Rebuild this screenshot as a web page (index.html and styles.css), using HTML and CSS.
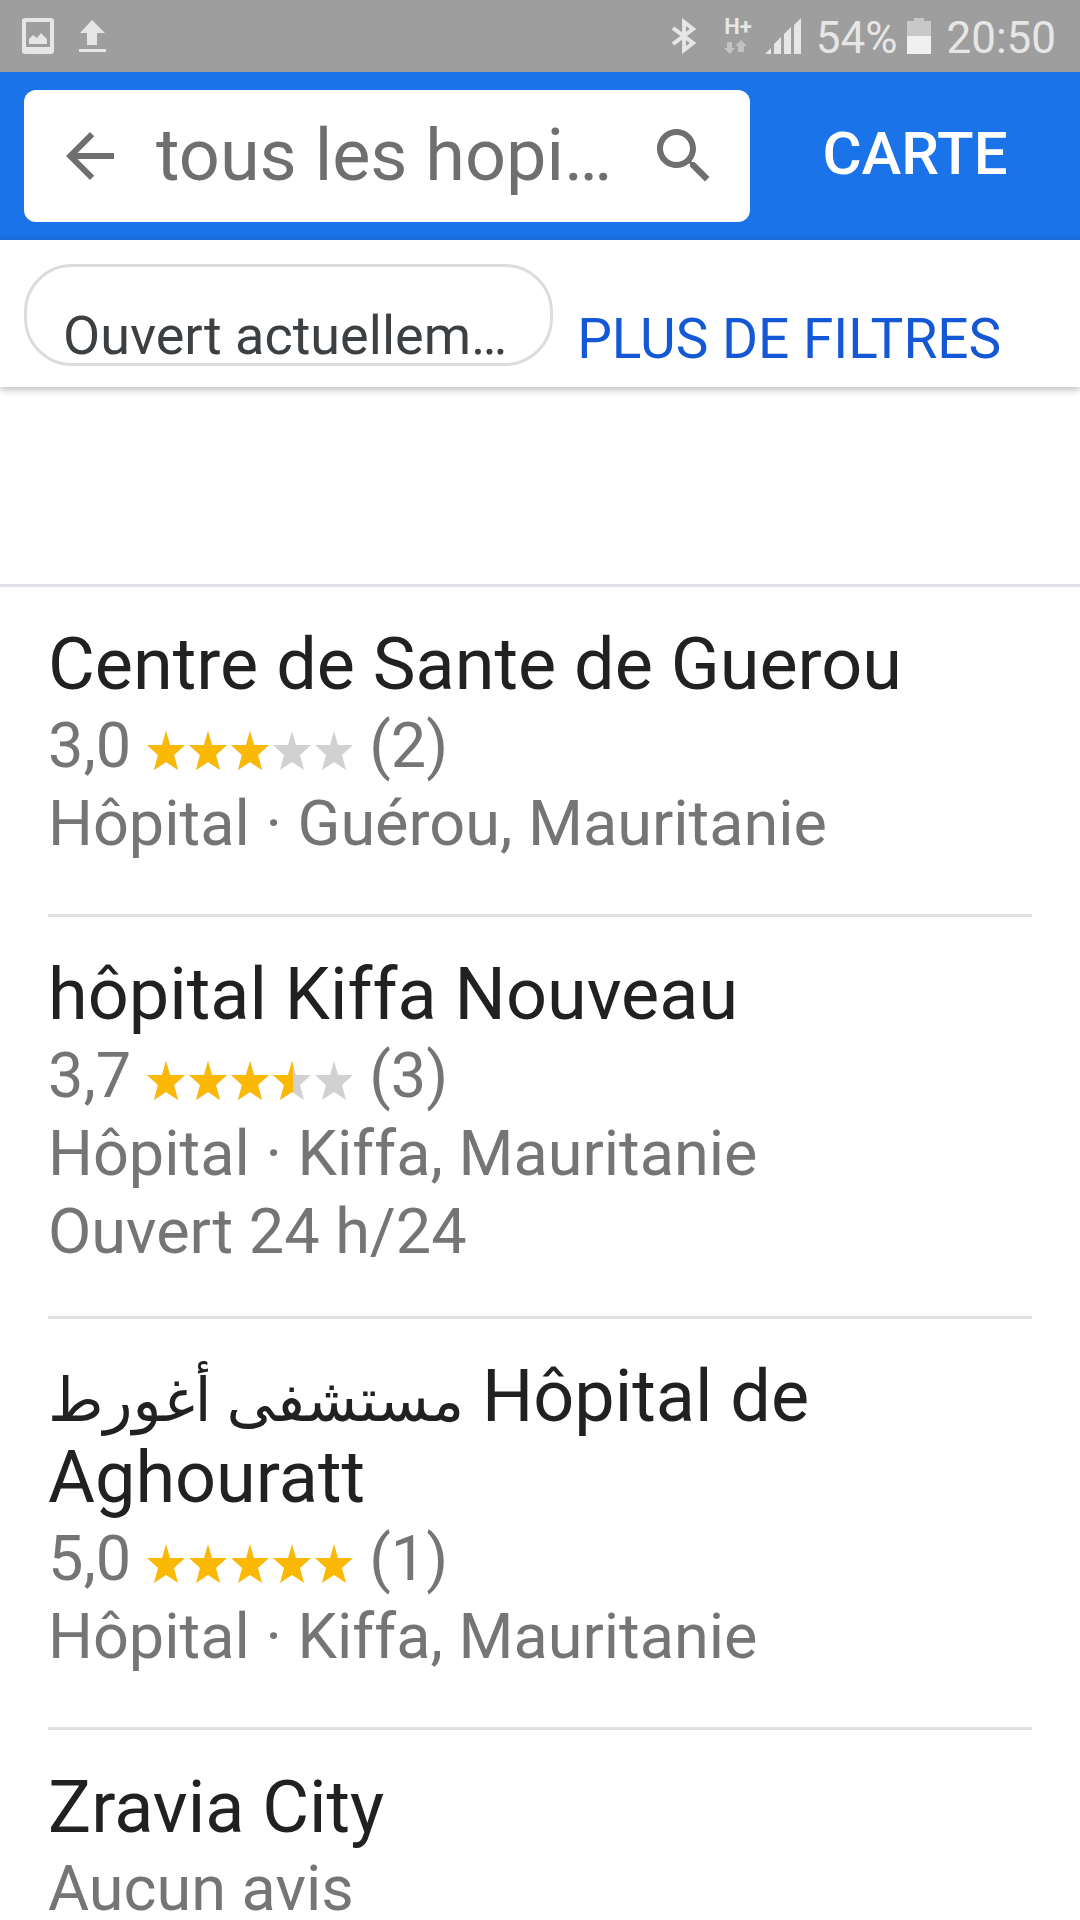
FILE: index.html
```
<!DOCTYPE html>
<html lang="fr">
<head>
<meta charset="utf-8">
<meta name="viewport" content="width=device-width, initial-scale=1">
<title>tous les hopitaux</title>
<link rel="stylesheet" href="styles.css">
</head>
<body>
<svg class="defs" aria-hidden="true">
  <defs>
    <path id="star" d="M19 0 23 14H38L27 24 31 39 19 31 7 39 11 24 0 14H15Z"/>
    <g id="star-row">
      <use href="#star"/><use href="#star" x="42"/><use href="#star" x="84"/><use href="#star" x="126"/><use href="#star" x="168"/>
    </g>
    <clipPath id="clip-3"><rect width="124" height="39"/></clipPath>
    <clipPath id="clip-3-5"><rect width="146" height="39"/></clipPath>
  </defs>
</svg>
<div class="app">
  <div class="status">
    <div class="status-group status-left">
      <svg width="32" height="36" viewBox="0 0 32 36"><path fill-rule="evenodd" d="M3 0H29Q32 0 32 3V33Q32 36 29 36H3Q0 36 0 33V3Q0 0 3 0ZM4 4V29H28V4ZM7 26V21L11 17 15 20 19 15 25 21V26Z"/></svg>
      <svg width="27" height="32" viewBox="0 0 27 32"><path d="M13 0 26 13H18V25H8V13H1ZM0 29H27V32H0Z"/></svg>
    </div>
    <div class="status-group status-right">
      <svg class="bluetooth" width="24" height="36" viewBox="0 0 24 36"><path fill="none" stroke="#e6e6e6" stroke-width="4" d="M1 10 21 25 12 32V4L21 11 1 26"/></svg>
      <div class="network">
        <span>H+</span>
        <svg width="24" height="14" viewBox="0 0 24 14"><path fill="#c2c2c2" d="M3 2H8V8H11L6 14 0 8H3ZM17 0 23 6H20V12H14V6H11Z"/></svg>
      </div>
      <svg class="signal" width="37" height="36" viewBox="0 0 37 36"><path d="M0 36 6 30V36ZM9 36V26L16 19V36ZM19 36V16L26 9V36ZM29 36V7L36 0V36Z"/></svg>
      <span class="readout">54%</span>
      <svg class="battery" width="24" height="36" viewBox="0 0 24 36"><path fill="#c8c8c8" d="M7 0H17V3H24V18H0V3H7Z"/><path fill="#f0f0f0" d="M0 18H24V36H0Z"/></svg>
      <span class="readout">20:50</span>
    </div>
  </div>

  <header class="header">
    <form class="search">
      <button class="icon-button" type="button" aria-label="Retour"><svg width="72" height="72" viewBox="0 0 24 24"><path d="M20 11H7.83l5.59-5.59L12 4l-8 8 8 8 1.41-1.41L7.83 13H20v-2z"/></svg></button>
      <input class="search-input" type="text" aria-label="Rechercher" value="tous les hopi…">
      <button class="icon-button" type="button" aria-label="Lancer la recherche"><svg width="72" height="72" viewBox="0 0 24 24"><path d="M15.5 14h-.79l-.28-.27C15.41 12.59 16 11.11 16 9.5 16 5.91 13.09 3 9.5 3S3 5.91 3 9.5 5.91 16 9.5 16c1.61 0 3.09-.59 4.23-1.57l.27.28v.79l5 4.99L20.49 19l-4.99-5zm-6 0C7.01 14 5 11.99 5 9.5S7.01 5 9.5 5 14 7.01 14 9.5 11.99 14 9.5 14z"/></svg></button>
    </form>
    <button class="map-button" type="button">CARTE</button>
  </header>

  <nav class="filters">
    <button class="chip" type="button">Ouvert actuellem…</button>
    <a class="more" href="#">PLUS DE FILTRES</a>
  </nav>

  <main class="results">
    <article class="place">
      <h2 class="name">Centre de Sante de Guerou</h2>
      <div class="line rating"><span>3,0</span><svg width="206" height="39" role="img" aria-label="3 étoiles sur 5"><use href="#star-row" fill="#d1d1d1"/><use href="#star-row" fill="#fbb905" clip-path="url(#clip-3)"/></svg><span>(2)</span></div>
      <div class="line">Hôpital · Guérou, Mauritanie</div>
    </article>
    <article class="place place-hours">
      <h2 class="name">hôpital Kiffa Nouveau</h2>
      <div class="line rating"><span>3,7</span><svg width="206" height="39" role="img" aria-label="3,5 étoiles sur 5"><use href="#star-row" fill="#d1d1d1"/><use href="#star-row" fill="#fbb905" clip-path="url(#clip-3-5)"/></svg><span>(3)</span></div>
      <div class="line">Hôpital · Kiffa, Mauritanie</div>
      <div class="line">Ouvert 24 h/24</div>
    </article>
    <article class="place">
      <h2 class="name"><span class="arabic" lang="ar">مستشفى أغورط</span> Hôpital de Aghouratt</h2>
      <div class="line rating"><span>5,0</span><svg width="206" height="39" role="img" aria-label="5 étoiles sur 5"><use href="#star-row" fill="#fbb905"/></svg><span>(1)</span></div>
      <div class="line">Hôpital · Kiffa, Mauritanie</div>
    </article>
    <article class="place">
      <h2 class="name">Zravia City</h2>
      <div class="line">Aucun avis</div>
    </article>
  </main>
</div>
</body>
</html>
```
FILE: styles.css
```
* {
  box-sizing: border-box;
}

body {
  margin: 0;
  background: #fff;
  font-family: Roboto, "DejaVu Sans", sans-serif;
}

button,
input {
  margin: 0;
  padding: 0;
  border: 0;
  background: none;
  font: inherit;
}

svg {
  display: block;
  flex: none;
}

.defs {
  position: absolute;
  width: 0;
  height: 0;
}

.app {
  display: flex;
  flex-direction: column;
  height: 100vh;
  overflow: hidden;
}

/* Status bar */
.status {
  display: flex;
  flex: none;
  justify-content: space-between;
  height: 72px;
  padding: 0 24px 0 22px;
  background: #9e9e9e;
  color: #e6e6e6;
  fill: #e6e6e6;
  font-size: 44px;
}

.status-group {
  display: flex;
  align-items: center;
}

.status-left {
  gap: 25px;
}

.bluetooth {
  margin-right: 28px;
}

.network {
  display: flex;
  flex-direction: column;
  gap: 5px;
  margin-right: 13px;
  font-size: 22px;
  font-weight: 700;
  line-height: 16px;
}

.signal {
  margin-right: 14px;
}

.readout {
  padding-top: 3px;
}

.battery {
  margin: 0 15px 0 10px;
}

/* Search header */
.header {
  display: flex;
  flex: none;
  height: 168px;
  padding: 18px 0 18px 24px;
  background: #1a73e8;
}

.search {
  display: flex;
  flex: 1;
  align-items: center;
  min-width: 0;
  padding: 0 30px;
  border-radius: 12px;
  background: #fff;
}

.icon-button {
  flex: none;
  fill: #6f6f6f;
}

.search-input {
  flex: 1;
  min-width: 0;
  padding: 0 0 2px 30px;
  color: #6f6f6f;
  font-size: 72px;
  text-overflow: ellipsis;
}

.map-button {
  flex: none;
  width: 330px;
  padding-bottom: 5px;
  color: #fff;
  font-size: 60px;
  font-weight: 500;
}

/* Filters */
.filters {
  display: flex;
  flex: none;
  align-items: flex-start;
  gap: 24px;
  height: 147px;
  padding: 24px;
  box-shadow: 0 2px 8px rgba(0, 0, 0, 0.3);
}

.chip {
  flex: none;
  height: 102px;
  padding: 42px 43px 0 36px;
  border: 3px solid #dadce0;
  border-radius: 48px;
  color: #3c4043;
  font-size: 54px;
  line-height: 54px;
}

.more {
  padding-top: 43px;
  color: #1558d6;
  font-size: 55px;
  line-height: 64px;
  text-decoration: none;
  white-space: nowrap;
}

/* Results */
.results {
  flex: 1;
  min-height: 0;
  margin-top: 197px;
  padding: 0 48px;
  overflow: hidden;
  border-top: 3px solid #e0e0e6;
}

.place {
  padding: 37px 0 51px;
  border-bottom: 3px solid #e0e0e0;
}

.place-hours {
  padding-bottom: 45px;
}

.name {
  margin: 0 0 2px;
  color: #212121;
  font-size: 72px;
  font-weight: 400;
  line-height: 81px;
}

.arabic {
  font-size: 60px;
  line-height: 1;
}

.line {
  color: #757575;
  font-size: 63px;
  line-height: 78px;
}

.rating {
  display: flex;
  align-items: center;
  gap: 16px;
}

.rating svg {
  margin-top: 8px;
}
```
